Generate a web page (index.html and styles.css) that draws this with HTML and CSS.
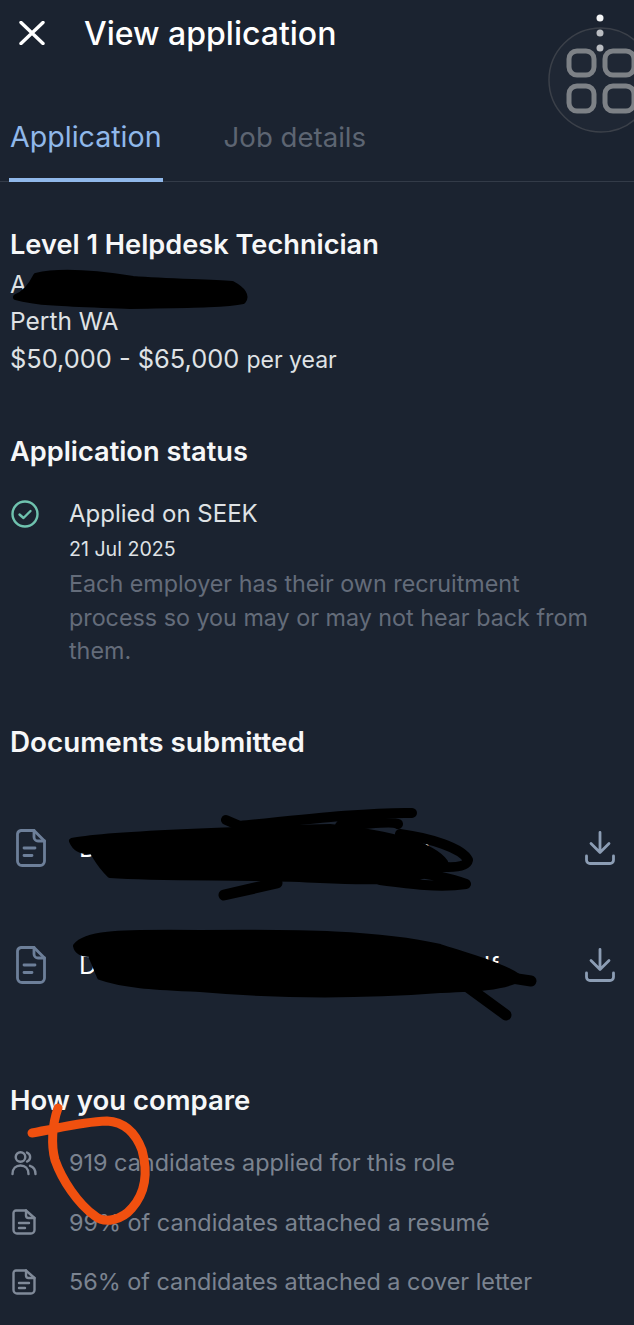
FILE: index.html
```html
<!DOCTYPE html>
<html lang="en">
<head>
  <meta charset="UTF-8">
  <title>View application</title>
  <link rel="stylesheet" href="styles.css">
</head>
<body>
  <header class="topbar">
    <svg class="close-icon" viewBox="0 0 26 24"><path d="M2 1.500 24 22.500M24 1.500 2 22.500"/></svg>
    <h1>View application</h1>
    <svg class="menu-dots" viewBox="0 0 10 40"><circle cx="5" cy="5" r="3.500" fill="#f4f5f6"/><circle cx="5" cy="20" r="3.500" fill="#b9bcc1"/><circle cx="5" cy="35" r="3.500" fill="#b9bcc1"/></svg>
  </header>

  <nav class="tabs">
    <a class="tab active">Application</a>
    <a class="tab">Job details</a>
  </nav>

  <section class="job">
    <h2>Level 1 Helpdesk Technician</h2>
    <p class="company">A</p>
    <p>Perth WA</p>
    <p class="salary">$50,000 - $65,000 <span class="per">per year</span></p>
  </section>

  <section class="status">
    <h2>Application status</h2>
    <div class="status-row">
      <svg class="check-icon" viewBox="0 0 30 30"><circle cx="15" cy="15" r="12.500"/><path d="M9.500 15.500 13.500 19 20.500 12"/></svg>
      <div>
        <p class="status-title">Applied on SEEK</p>
        <p class="status-date">21 Jul 2025</p>
        <p class="muted">Each employer has their own recruitment process so you may or may not hear back from them.</p>
      </div>
    </div>
  </section>

  <section class="docs">
    <h2>Documents submitted</h2>
    <div class="doc-row">
      <svg class="doc-icon" viewBox="0 0 30 38"><path d="M5 1.500H18L28.500 12V32A4.500 4.500 0 0 1 24 36.500H6A4.500 4.500 0 0 1 1.500 32V5A4 4 0 0 1 5 1.500Z"/><path d="M18 1.500V8A4 4 0 0 0 22 12H28.500M8 19H19M8 26.500H16"/></svg>
      <span class="doc-name">D</span>
      <svg class="download-icon" viewBox="0 0 30 34"><path d="M15 1.500V21M6 12.500 15 21.500 24 12.500M1.500 25V29A3.500 3.500 0 0 0 5 32.500H25A3.500 3.500 0 0 0 28.500 29V25"/></svg>
    </div>
    <div class="doc-row">
      <svg class="doc-icon" viewBox="0 0 30 38"><path d="M5 1.500H18L28.500 12V32A4.500 4.500 0 0 1 24 36.500H6A4.500 4.500 0 0 1 1.500 32V5A4 4 0 0 1 5 1.500Z"/><path d="M18 1.500V8A4 4 0 0 0 22 12H28.500M8 19H19M8 26.500H16"/></svg>
      <span class="doc-name">D</span>
      <svg class="download-icon" viewBox="0 0 30 34"><path d="M15 1.500V21M6 12.500 15 21.500 24 12.500M1.500 25V29A3.500 3.500 0 0 0 5 32.500H25A3.500 3.500 0 0 0 28.500 29V25"/></svg>
    </div>
  </section>

  <section class="compare">
    <h2>How you compare</h2>
    <div class="compare-row">
      <svg class="small-icon" viewBox="0 0 26 26"><circle cx="9.500" cy="7" r="4.800"/><path d="M1.500 24C1.500 18.500 5 15.500 9.500 15.500S17.500 18.500 17.500 24M16 2.500A4.800 4.800 0 0 1 16 11.500M19 15.800C22.500 16.800 24.500 19.500 24.500 24"/></svg>
      <span>919 candidates applied for this role</span>
    </div>
    <div class="compare-row">
      <svg class="small-icon" viewBox="0 0 26 26"><path d="M5 1.500H15L23.500 9V21A3.500 3.500 0 0 1 20 24.500H6A3.500 3.500 0 0 1 2.500 21V4A2.500 2.500 0 0 1 5 1.500Z"/><path d="M15 1.500V6.500A2.500 2.500 0 0 0 17.500 9H23.500M8 14H18M8 19H14"/></svg>
      <span>99% of candidates attached a resumé</span>
    </div>
    <div class="compare-row">
      <svg class="small-icon" viewBox="0 0 26 26"><path d="M5 1.500H15L23.500 9V21A3.500 3.500 0 0 1 20 24.500H6A3.500 3.500 0 0 1 2.500 21V4A2.500 2.500 0 0 1 5 1.500Z"/><path d="M15 1.500V6.500A2.500 2.500 0 0 0 17.500 9H23.500M8 14H18M8 19H14"/></svg>
      <span>56% of candidates attached a cover letter</span>
    </div>
  </section>

  <!-- floating button, redaction scribbles and the orange circle sit on top of the screenshot -->
  <svg class="markup" viewBox="0 0 634 1325">
    <circle class="float-ring" cx="601" cy="80" r="52"/>
    <g class="float-squares">
      <rect x="569" y="51" width="25" height="24" rx="8"/>
      <rect x="605" y="51" width="29" height="24" rx="8"/>
      <rect x="569" y="86" width="25" height="25" rx="8"/>
      <rect x="605" y="86" width="29" height="25" rx="8"/>
    </g>
    <text class="glint" x="484" y="975">lf</text>
    <text class="glint" x="424" y="856">l</text>
    <g class="redact">
      <path d="M16 297C24 294 30 288 36 276C60 270 95 273 133 279C170 282 205 282 232 284C243 290 247 296 243 301C225 305 180 305 130 306C85 304 40 304 16 297Z"/>
      <path d="M72 841C100 834 250 829 330 827C380 832 430 842 445 862C430 880 400 884 320 880C250 876 170 879 110 875C100 866 96 857 92 851C82 852 75 848 72 841Z"/>
      <path d="M76 946C85 934 110 932 200 933C300 932 380 933 440 947C480 960 505 967 520 978C505 988 470 989 440 990C360 996 280 996 200 989C160 987 125 986 100 977C96 968 93 959 90 954C82 954 77 951 76 946Z"/>
      <path class="redact-line" d="M224 895 277 883M465 985 506 1015M505 977 531 981"/>
      <path class="redact-strand" d="M226 820 240 826M240 826C300 820 370 812 412 813M340 826C380 822 395 822 398 824M400 834C430 838 462 848 468 860C466 870 440 868 400 862M385 868C420 872 450 878 466 884C440 888 410 884 380 880"/>
    </g>
    <path class="pen" d="M32 1133C60 1128 80 1122 107 1121C125 1122 136 1134 142 1150C148 1172 146 1192 132 1208C122 1220 105 1224 95 1216C78 1204 62 1180 55 1160C51 1145 52 1125 58 1108"/>
  </svg>
</body>
</html>
```

FILE: styles.css
```css
* {
  box-sizing: border-box;
}
body {
  position: relative;
  margin: 0;
  height: 1325px;
  overflow: hidden;
  background-color: #1b2330;
  color: #eef0f2;
  font-family: Inter, "Liberation Sans", sans-serif;
}
h1, h2, p {
  margin: 0;
}
svg {
  flex: none;
  fill: none;
  stroke-linecap: round;
  stroke-linejoin: round;
}

.topbar {
  display: flex;
  align-items: center;
  height: 66px;
  padding-left: 19px;
}
.close-icon {
  width: 26px;
  height: 24px;
  stroke: #fff;
  stroke-width: 3.400;
}
h1 {
  margin-left: 39px;
  font-size: 32px;
  font-weight: 500;
  color: #fff;
}
.menu-dots {
  width: 10px;
  height: 40px;
  margin-left: auto;
  margin-right: 29px;
}

.tabs {
  display: flex;
  gap: 60px;
  margin-top: 34px;
  padding-left: 9px;
  border-bottom: 1px solid #333b48;
}
.tab {
  margin-bottom: -1px;
  padding: 20px 1px 24px;
  line-height: 34px;
  font-size: 27.600px;
  color: #5d6572;
  border-bottom: 4px solid transparent;
}
.tab.active {
  font-size: 28.600px;
  color: #90b8ea;
  border-bottom-color: #90b8ea;
}

h2 {
  line-height: 37px;
  font-size: 27.200px;
  font-weight: 600;
  color: #f6f7f8;
}
section {
  padding-left: 10px;
}
.job {
  margin-top: 44px;
}
.job p {
  line-height: 37px;
  font-size: 24.500px;
  color: #dfe2e5;
}
.job .company {
  margin-top: 3px;
}
.job .salary {
  font-size: 25.400px;
}
.job .per {
  font-size: 23px;
}

.status {
  margin-top: 54px;
}
.status-row {
  display: flex;
  margin-top: 26px;
}
.check-icon {
  width: 30px;
  height: 30px;
  margin-top: 3px;
  stroke: #6fc2ae;
  stroke-width: 2.400;
}
.status-row > div {
  margin-left: 29px;
  padding-right: 30px;
}
.status-title {
  line-height: 36px;
  font-size: 24px;
  color: #dfe2e5;
}
.status-date {
  line-height: 34px;
  font-size: 19.600px;
  color: #dfe2e5;
}
.muted {
  padding-top: 1px;
  line-height: 33.500px;
  font-size: 23.300px;
  color: #646c7a;
}

.docs {
  margin-top: 56px;
  padding-right: 19px;
}
.docs h2 {
  margin-bottom: 29px;
  font-size: 27.800px;
}
.doc-row {
  display: flex;
  align-items: center;
  height: 117px;
}
.doc-icon {
  width: 30px;
  height: 38px;
  margin-left: 6px;
  stroke: #6d7f99;
  stroke-width: 2.800;
}
.doc-name {
  margin-left: 33px;
  font-size: 25px;
  color: #fff;
}
.download-icon {
  width: 30px;
  height: 34px;
  margin-left: auto;
  stroke: #8c9db4;
  stroke-width: 2.800;
}

.compare {
  margin-top: 58px;
}
.compare h2 {
  margin-bottom: 14.500px;
  font-size: 27.500px;
}
.compare-row {
  display: flex;
  align-items: center;
  height: 59.500px;
  font-size: 23.400px;
  color: #7b8390;
}
.small-icon {
  width: 26px;
  height: 26px;
  margin-left: 1px;
  margin-right: 32px;
  stroke: #808a99;
  stroke-width: 2.400;
}

.markup {
  position: absolute;
  top: 0;
  left: 0;
  width: 634px;
  height: 1325px;
}
.float-ring {
  fill: rgba(255, 255, 255, 0.02);
  stroke: #3b4049;
  stroke-width: 1.500;
}
.float-squares rect {
  stroke: #7d8186;
  stroke-width: 5;
}
.glint {
  font-size: 25px;
  fill: #fff;
}
.redact path {
  fill: #000;
  stroke: #000;
  stroke-width: 6;
}
.redact .redact-line {
  fill: none;
  stroke-width: 11;
}
.redact .redact-strand {
  fill: none;
  stroke-width: 10;
}
.pen {
  stroke: #f0500f;
  stroke-width: 9;
}
```
